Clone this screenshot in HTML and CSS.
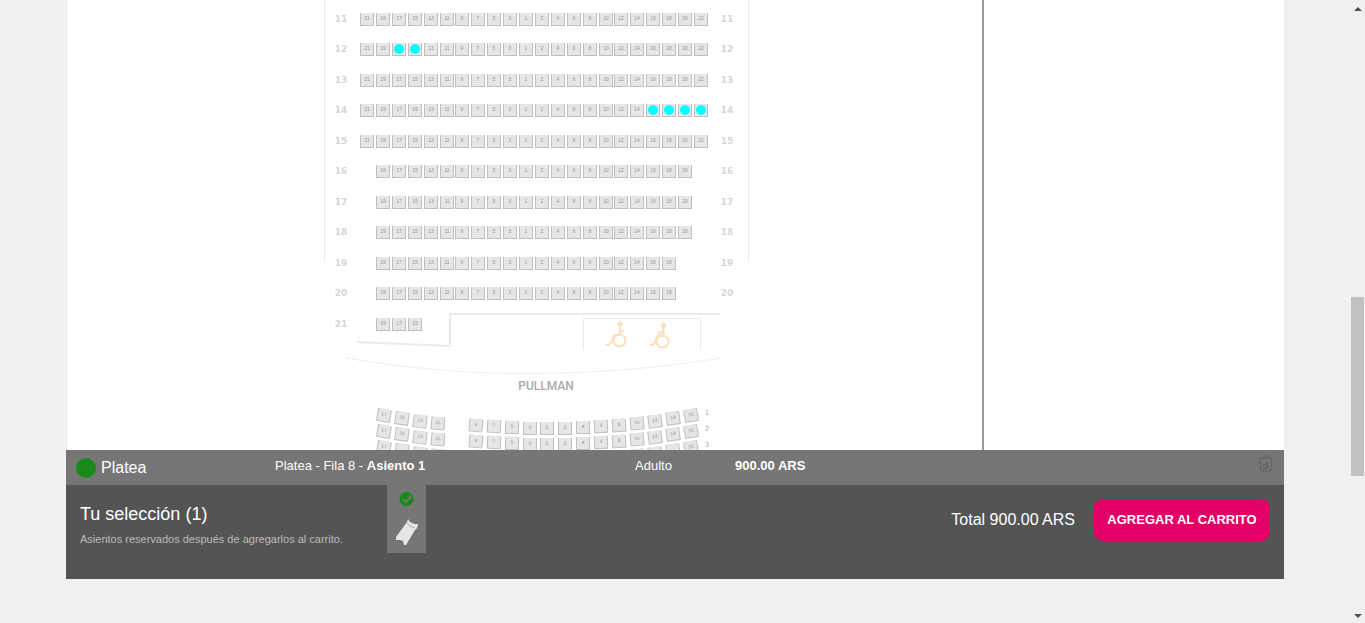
FILE: index.html
```
<!DOCTYPE html>
<html lang="es">
<head>
    <meta charset="UTF-8">
    <meta name="viewport" content="width=device-width, initial-scale=1.0">
    <title>Tu selección</title>
    <link rel="stylesheet" href="styles.css">
</head>
<body>
    <main class="page">
        <div class="venue">
            <div class="map-panel">
                <svg id="seatMap" class="seat-map" width="451" height="450" viewBox="299 0 451 450">
                    <!-- Walls -->
                    <g class="wall">
                        <path d="M324.5 0V262M748.5 0V262"/>
                        <path stroke-width="2" d="M357 342L450 346V314H720"/>
                        <path d="M583.5 349V318.5H700.5V349"/>
                        <path stroke-dasharray="5 1" d="M346 358Q440 374 530 373.500Q630 373 721 358"/>
                    </g>
                    <!-- Wheelchair places -->
                    <g class="wheelchair">
                        <circle cx="620" cy="324" r="2.600"/>
                        <path d="M620 325V335M624 331H619M613 335H620"/>
                        <circle class="wheel" cx="619.500" cy="340.500" r="6"/>
                        <path d="M614 336L611 343Q609 346 606 344"/>
                        <circle cx="663.500" cy="325" r="2.600"/>
                        <path d="M663.500 326V336L657 335"/>
                        <path stroke="#e4e0da" d="M658 333L663 332"/>
                        <circle class="wheel" cx="662.500" cy="341.500" r="6"/>
                        <path d="M657 336.500L655 342Q653 346 650 344"/>
                    </g>
                    <text class="zone" x="546" y="390">PULLMAN</text>
                </svg>
            </div>
            <aside class="side-panel"></aside>
        </div>

        <!-- Selected seat -->
        <div class="ticket-row">
            <div class="sector"><span class="dot"></span>Platea</div>
            <div>Platea - Fila 8 - <b>Asiento 1</b></div>
            <div>Adulto</div>
            <div><b>900.00 ARS</b></div>
            <button class="remove" type="button" aria-label="Eliminar">
                <svg width="16" height="18" viewBox="0 0 16 18">
                    <path d="M1 3H15M6 1H11M3 4L2 9L3 16H13L14 9L13 4M6 14V8M8 7V14M10 8V14"/>
                </svg>
            </button>
        </div>

        <!-- Summary -->
        <div class="summary">
            <div class="summary-text">
                <h2>Tu selección (1)</h2>
                <p>Asientos reservados después de agregarlos al carrito.</p>
            </div>
            <div class="ticket-tab">
                <svg width="16" height="16" viewBox="0 0 16 16">
                    <circle cx="7.500" cy="8" r="7" fill="#188a18"/>
                    <path d="M4 8L7 11L12 5" fill="none" stroke="#767676" stroke-width="2"/>
                </svg>
                <svg width="24" height="28" viewBox="0 0 24 28">
                    <path d="M13 0L15 3L19 5L23 5L22 9L20 11L11 26L9 26L8 22L5 21L1 21L1 18L12 3Z" fill="#e6e6e6"/>
                    <path d="M12 4L15 7L20 9" fill="none" stroke="#aaa"/>
                </svg>
            </div>
            <div class="total">Total 900.00 ARS</div>
            <button class="add-cart" type="button">AGREGAR AL CARRITO</button>
        </div>
    </main>

    <div class="scrollbar">
        <span class="arrow up"></span>
        <span class="thumb"></span>
        <span class="arrow down"></span>
    </div>

    <script>
        const map = document.getElementById('seatMap');
        const numbers = [21, 19, 17, 15, 13, 11, 9, 7, 5, 3, 1, 2, 4, 6, 8, 10, 12, 14, 16, 18, 20, 22];

        function add(parent, tag, attrs, text) {
            const el = document.createElementNS('http://www.w3.org/2000/svg', tag);
            for (const key in attrs) el.setAttribute(key, attrs[key]);
            if (text !== undefined) el.textContent = text;
            parent.appendChild(el);
            return el;
        }

        // x, y is the center of the seat
        function addSeat(x, y, number, angle, free) {
            const seat = add(map, 'g', { class: 'seat', transform: `translate(${x} ${y}) rotate(${angle})` });
            add(seat, 'rect', { x: -7, y: -6, width: 14, height: 13, class: 'seat-edge' });
            add(seat, 'rect', { x: -6, y: -6, width: 12, height: 12, class: 'seat-face' });
            if (y < 448) add(seat, 'text', { x: 0, y: 1 }, number);
            if (free) add(seat, 'circle', { cx: 0, cy: 0, r: 5 });
        }

        // Platea: row, first seat, last seat, free seats
        const rows = [
            [11, 0, 21, []],
            [12, 0, 21, [17, 15]],
            [13, 0, 21, []],
            [14, 0, 21, [16, 18, 20, 22]],
            [15, 0, 21, []],
            [16, 1, 20, []],
            [17, 1, 20, []],
            [18, 1, 20, []],
            [19, 1, 19, []],
            [20, 1, 19, []],
            [21, 1, 3, []]
        ];
        rows.forEach(([row, first, last, free], r) => {
            const y = 19 + Math.floor(r * 30.5);
            for (let i = first; i <= last; i++) {
                addSeat(367 + Math.round(i * 15.9), y, numbers[i], 0, free.includes(numbers[i]));
            }
            add(map, 'text', { x: 341, y: y + 3, class: 'row-label' }, row);
            if (row < 21) add(map, 'text', { x: 727, y: y + 3, class: 'row-label' }, row);
        });

        // Pullman: x, y, number, angle
        const pullman = [
            [384, 415, 17, 9], [402, 418, 15, 8], [420, 421, 13, 7], [438, 423, 11, 5],
            [476, 425, 9, 5], [494, 426, 7, 3], [512, 427, 5, 2], [530, 428, 3, 1],
            [547, 428, 1, 0], [565, 428, 2, 0], [583, 427, 4, -1], [601, 426, 6, -2],
            [619, 425, 8, -4], [637, 423, 10, -5], [655, 421, 12, -7], [673, 418, 14, -8], [691, 415, 16, -9]
        ];
        for (let r = 0; r < 3; r++) {
            pullman.forEach(([x, y, number, angle]) => addSeat(x, y + r * 16, number, angle, false));
            add(map, 'text', { x: 707, y: 415 + r * 16, class: 'pullman-label' }, r + 1);
        }
    </script>
</body>
</html>
```
FILE: styles.css
```
* {
    box-sizing: border-box;
}
body {
    font-family: "Liberation Sans", Arial, sans-serif;
    font-size: 13px;
    background-color: #f1f1f1;
    color: #fff;
    margin: 0;
    display: flex;
    min-height: 100vh;
}
.page {
    flex: 1;
    padding: 0 66px;
}
.venue {
    display: flex;
    background: #fff;
    border-left: 1px solid #e5e5e5;
}
.map-panel {
    flex: 1;
    display: flex;
    justify-content: center;
    border-right: 2px solid #999;
}
.side-panel {
    width: 300px;
}
.seat-map {
    display: block;
}
.wall {
    fill: none;
    stroke: #ebebeb;
}
.wheelchair {
    fill: none;
    stroke: #fce0bb;
    stroke-width: 2;
}
.wheelchair circle {
    fill: #fce0bb;
    stroke: none;
}
.wheelchair .wheel {
    fill: none;
    stroke: #fce0bb;
}
.zone {
    font: 500 12px Roboto, sans-serif;
    fill: #aaa;
    text-anchor: middle;
}
.row-label {
    font: bold 9px "DejaVu Sans", sans-serif;
    fill: #d6d6d6;
    text-anchor: middle;
}
.pullman-label {
    font: 7px "DejaVu Sans", sans-serif;
    fill: #aaa;
    text-anchor: middle;
}
.seat-edge {
    fill: #bfbfbf;
}
.seat-face {
    fill: #e6e6e6;
}
.seat text {
    font: 5px "Liberation Sans", sans-serif;
    fill: #999;
    text-anchor: middle;
}
.seat circle {
    fill: #0ff;
}
.ticket-row {
    display: grid;
    grid-template-columns: 199px 360px 100px 1fr auto;
    height: 35px;
    padding: 0 10px;
    line-height: 31px;
    background: #767676;
}
.sector {
    display: flex;
    align-items: center;
    gap: 5px;
    font-size: 16px;
    line-height: 35px;
}
.dot {
    width: 20px;
    height: 20px;
    border-radius: 50%;
    background: #188a18;
}
.remove {
    padding: 5px 0 0;
    border: 0;
    background: none;
    line-height: 0;
    align-self: start;
    cursor: pointer;
}
.remove path {
    fill: none;
    stroke: #4a4a4a;
    stroke-dasharray: 1 1;
}
.summary {
    display: flex;
    align-items: flex-start;
    height: 94px;
    padding: 0 14px;
    background: #545454;
}
.summary-text {
    width: 307px;
    padding-top: 18px;
}
.summary h2 {
    margin: 0;
    font-size: 18px;
    font-weight: normal;
    line-height: 22px;
}
.summary p {
    margin: 6px 0 0;
    font-size: 11px;
    line-height: 16px;
    color: #bbb;
}
.ticket-tab {
    display: flex;
    flex-direction: column;
    align-items: center;
    gap: 12px;
    width: 39px;
    height: 68px;
    padding-top: 6px;
    background: #767676;
}
.total {
    margin-left: auto;
    padding-right: 19px;
    font-size: 16px;
    line-height: 70px;
}
.add-cart {
    width: 176px;
    height: 42px;
    margin-top: 14px;
    padding: 0 0 2px;
    border: 0;
    border-radius: 9px;
    background: #e20066;
    color: #fff;
    font: bold 13px "Liberation Sans", Arial, sans-serif;
    cursor: pointer;
}
.scrollbar {
    position: sticky;
    top: 0;
    display: flex;
    flex-direction: column;
    justify-content: space-between;
    align-items: center;
    width: 15px;
    height: 100vh;
    padding: 7px 0 5px;
    background: #f0f0f0;
}
.thumb {
    position: absolute;
    top: 297px;
    width: 13px;
    height: 179px;
    background: #c1c1c1;
}
.arrow {
    border: 4px solid transparent;
}
.up {
    border-top: 0;
    border-bottom-color: #505050;
}
.down {
    border-bottom: 0;
    border-top-color: #505050;
}
```
